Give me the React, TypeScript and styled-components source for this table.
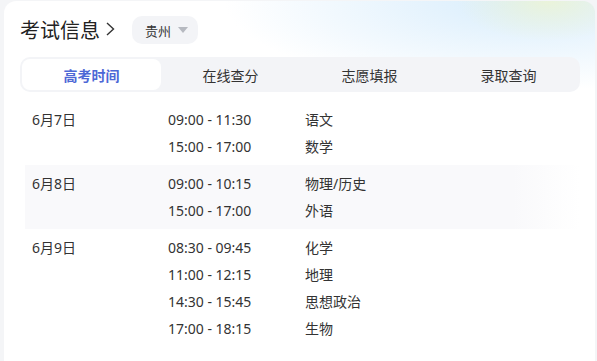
import { createGlobalStyle, styled } from "styled-components";

const schedule = [
  {
    date: "6月7日",
    items: [
      ["09:00 - 11:30", "语文"],
      ["15:00 - 17:00", "数学"],
    ],
  },
  {
    date: "6月8日",
    items: [
      ["09:00 - 10:15", "物理/历史"],
      ["15:00 - 17:00", "外语"],
    ],
  },
  {
    date: "6月9日",
    items: [
      ["08:30 - 09:45", "化学"],
      ["11:00 - 12:15", "地理"],
      ["14:30 - 15:45", "思想政治"],
      ["17:00 - 18:15", "生物"],
    ],
  },
];

const tabs = ["高考时间", "在线查分", "志愿填报", "录取查询"];

function App() {
  return (
    <>
      <GlobalStyle />
      <Card>
        <Header>
          <Title>
            考试信息
            <svg width="12" height="18" viewBox="0 0 12 18">
              <path d="M3 3 L9.5 9 L3 15" fill="none" stroke="#333" strokeWidth="1.4" />
            </svg>
          </Title>
          <Region>
            贵州
            <svg width="10" height="6" viewBox="0 0 10 6">
              <path d="M0 0 H10 L5 6 Z" fill="#b6b9c0" />
            </svg>
          </Region>
        </Header>

        <TabBar>
          {tabs.map((t, i) => (
            <Tab key={t} $active={i === 0}>
              {t}
            </Tab>
          ))}
        </TabBar>

        <Table>
          {schedule.map((day, i) => (
            <DayGroup key={day.date} $striped={i === 1}>
              <DateCell>{day.date}</DateCell>
              <Slots>
                {day.items.map(([time, subject]) => (
                  <Slot key={time + subject}>
                    <TimeCell>{time}</TimeCell>
                    <span>{subject}</span>
                  </Slot>
                ))}
              </Slots>
            </DayGroup>
          ))}
        </Table>
      </Card>
    </>
  );
}

const GlobalStyle = createGlobalStyle`
  body {
    margin: 0;
    overflow: hidden;
    background: #f4f5f7;
    font-family: "Noto Sans", "Noto Sans CJK SC", sans-serif;
    color: #333;
  }
`;

const Card = styled.div`
  margin: 1px 2px 0 4px;
  height: 380px;
  padding: 0 15px 0 16px;
  border-radius: 12px;
  background:
    radial-gradient(ellipse 90px 40px at 92% 0%, rgba(236, 244, 214, 0.9), transparent 100%),
    radial-gradient(ellipse 300px 90px at 88% 0%, rgba(214, 236, 252, 0.95), transparent 100%),
    #fff;
`;

const Header = styled.div`
  display: flex;
  align-items: center;
  height: 56px;
  gap: 16px;
`;

const Title = styled.h1`
  margin: 0;
  display: flex;
  align-items: center;
  gap: 4px;
  font-size: 20px;
  font-weight: 400;
  color: #222;
`;

const Region = styled.div`
  display: flex;
  align-items: center;
  gap: 7px;
  height: 28px;
  padding: 0 10px 0 13px;
  margin-top: 2px;
  border-radius: 10px;
  background: #f3f4f7;
  font-size: 13px;
  color: #333;
`;

const TabBar = styled.div`
  display: grid;
  grid-template-columns: repeat(4, 1fr);
  padding: 2px;
  border-radius: 10px;
  background: #f3f4f7;
`;

const Tab = styled.div<{ $active?: boolean }>`
  height: 31px;
  display: flex;
  align-items: center;
  justify-content: center;
  border-radius: 8px;
  font-size: 14px;
  font-weight: ${(p) => (p.$active ? 600 : 400)};
  color: ${(p) => (p.$active ? "#4d68d6" : "#333")};
  background: ${(p) => (p.$active ? "#fff" : "transparent")};
`;

const Table = styled.div`
  margin-top: 9px;
  margin-left: 5px;
  font-size: 14px;
`;

const DayGroup = styled.div<{ $striped?: boolean }>`
  display: flex;
  padding: 5px 0 5px 7px;
  background: ${(p) =>
    p.$striped
      ? "linear-gradient(to right, #f9f9fb 0%, #f9f9fb 88%, rgba(249, 249, 251, 0) 100%)"
      : "transparent"};
`;

const DateCell = styled.div`
  width: 136px;
  line-height: 27px;
`;

const Slots = styled.div`
  display: flex;
  flex-direction: column;
`;

const Slot = styled.div`
  display: flex;
  line-height: 27px;
`;

const TimeCell = styled.span`
  width: 137px;
`;

export default App;
